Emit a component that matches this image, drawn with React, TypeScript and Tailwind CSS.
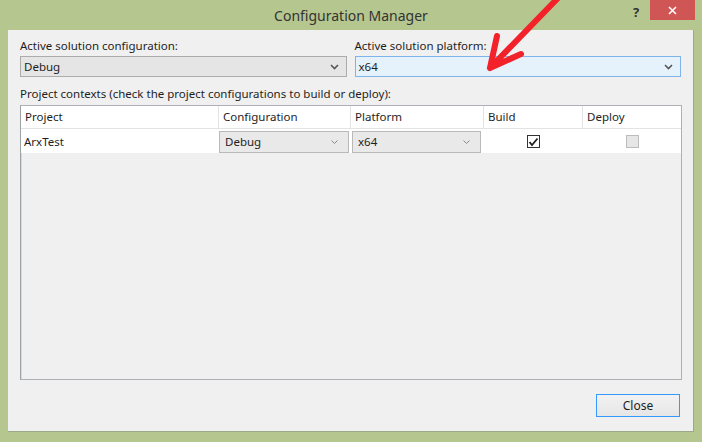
import React from "react";

const font = { fontFamily: '"Noto Sans", "Open Sans", sans-serif' };

function Chevron({ className = "" }: { className?: string }) {
  return (
    <svg width="9" height="6" viewBox="0 0 9 6" className={className}>
      <path d="M1 1 L4.5 4.5 L8 1" fill="none" stroke="currentColor" strokeWidth="1.6" />
    </svg>
  );
}

function Combo({ value, active = false }: { value: string; active?: boolean }) {
  return (
    <div
      className={`flex h-[21px] items-center justify-between border pl-[3px] pr-[7px] text-[11.5px] text-[#1e1e1e] ${
        active ? "border-[#7eb4ea] bg-[#e5f1fb]" : "border-[#acacac] bg-[#e5e5e5]"
      }`}
    >
      <span>{value}</span>
      <Chevron className="text-[#555]" />
    </div>
  );
}

function CellCombo({ value }: { value: string }) {
  return (
    <div className="flex h-[22px] items-center justify-between border border-[#b9b9b9] bg-[#e9e9e9] pl-[5px] pr-[10px] text-[11.5px] text-[#1e1e1e]">
      <span>{value}</span>
      <svg width="7" height="4" viewBox="0 0 7 4">
        <path d="M0.5 0.5 L3.5 3.5 L6.5 0.5" fill="none" stroke="#888" strokeWidth="1" />
      </svg>
    </div>
  );
}

export default function App() {
  return (
    <div className="relative h-[442px] w-[702px] overflow-hidden bg-[#b6c68f] select-none" style={font}>
      {/* title bar */}
      <div className="relative flex h-[30px] items-center justify-center">
        <span className="text-[14px] text-[#333]">Configuration Manager</span>
        <span className="absolute left-[633px] top-[3px] text-[13px] font-bold text-[#333]">?</span>
        <div className="absolute left-[650px] top-0 flex h-[20px] w-[45px] items-center justify-center bg-[#d05555]">
          <svg width="9" height="9" viewBox="0 0 9 9">
            <path d="M1 1 L8 8 M8 1 L1 8" stroke="#fff" strokeWidth="1.6" />
          </svg>
        </div>
      </div>

      {/* client area */}
      <div className="ml-[8px] flex h-[402px] w-[686px] flex-col border-r border-b border-[#9aa98a] bg-[#f0f0f0] px-[12px] text-[11.5px] text-[#1e1e1e]">
        <div className="mt-[8px] flex gap-[8px]">
          <div className="flex w-[327px] flex-col">
            <span className="h-[18px] leading-[16px]">Active solution configuration:</span>
            <Combo value="Debug" />
          </div>
          <div className="flex w-[327px] flex-col">
            <span className="h-[18px] leading-[16px]">Active solution platform:</span>
            <Combo value="x64" active />
          </div>
        </div>

        <div className="mt-[9px] h-[19px] leading-[16px]">
          Project contexts (check the project configurations to build or deploy):
        </div>

        <div className="flex h-[275px] w-[662px] flex-col border border-[#adb0b5] border-l-[#9ea3a8] bg-[#f0f0f0] shadow-[inset_1px_1px_0_#d8d8d8]">
          <div className="flex h-[23px] border-b border-[#e3e3e3] bg-white">
            <div className="flex w-[198px] items-center border-r border-[#e3e3e3] pl-[4px]">Project</div>
            <div className="flex w-[132px] items-center border-r border-[#e3e3e3] pl-[4px]">Configuration</div>
            <div className="flex w-[133px] items-center border-r border-[#e3e3e3] pl-[4px]">Platform</div>
            <div className="flex w-[99px] items-center border-r border-[#e3e3e3] pl-[4px]">Build</div>
            <div className="flex flex-1 items-center pl-[4px]">Deploy</div>
          </div>
          <div className="flex h-[24px] items-center bg-white pt-[1px]">
            <div className="w-[198px] pl-[3px]">ArxTest</div>
            <div className="w-[132px] pr-[2px]">
              <CellCombo value="Debug" />
            </div>
            <div className="w-[133px] pl-[1px] pr-[3px]">
              <CellCombo value="x64" />
            </div>
            <div className="flex w-[99px] justify-center">
              <div className="flex h-[13px] w-[13px] items-center justify-center border border-[#333] bg-white">
                <svg width="11" height="10" viewBox="0 0 11 10">
                  <path d="M1.5 5 L4 8 L9.5 1.5" fill="none" stroke="#222" strokeWidth="1.8" />
                </svg>
              </div>
            </div>
            <div className="flex flex-1 justify-center">
              <div className="h-[13px] w-[13px] border border-[#bcbcbc] bg-[#e6e6e6]" />
            </div>
          </div>
        </div>

        <div className="mt-[14px] flex justify-end pr-[1px]">
          <button className="flex h-[23px] w-[84px] items-center justify-center border border-[#3399ff] bg-gradient-to-b from-[#f2f2f2] to-[#e6e6e6] text-[12px] text-[#1e1e1e]">
            Close
          </button>
        </div>
      </div>

      {/* red annotation arrow */}
      <svg className="pointer-events-none absolute left-0 top-0" width="702" height="442">
        <path
          d="M558 -2 L490 68 M490 68 L497 36 M490 68 L521 54"
          fill="none"
          stroke="#f2212a"
          strokeWidth="6"
          strokeLinecap="round"
          strokeLinejoin="round"
        />
      </svg>
    </div>
  );
}
